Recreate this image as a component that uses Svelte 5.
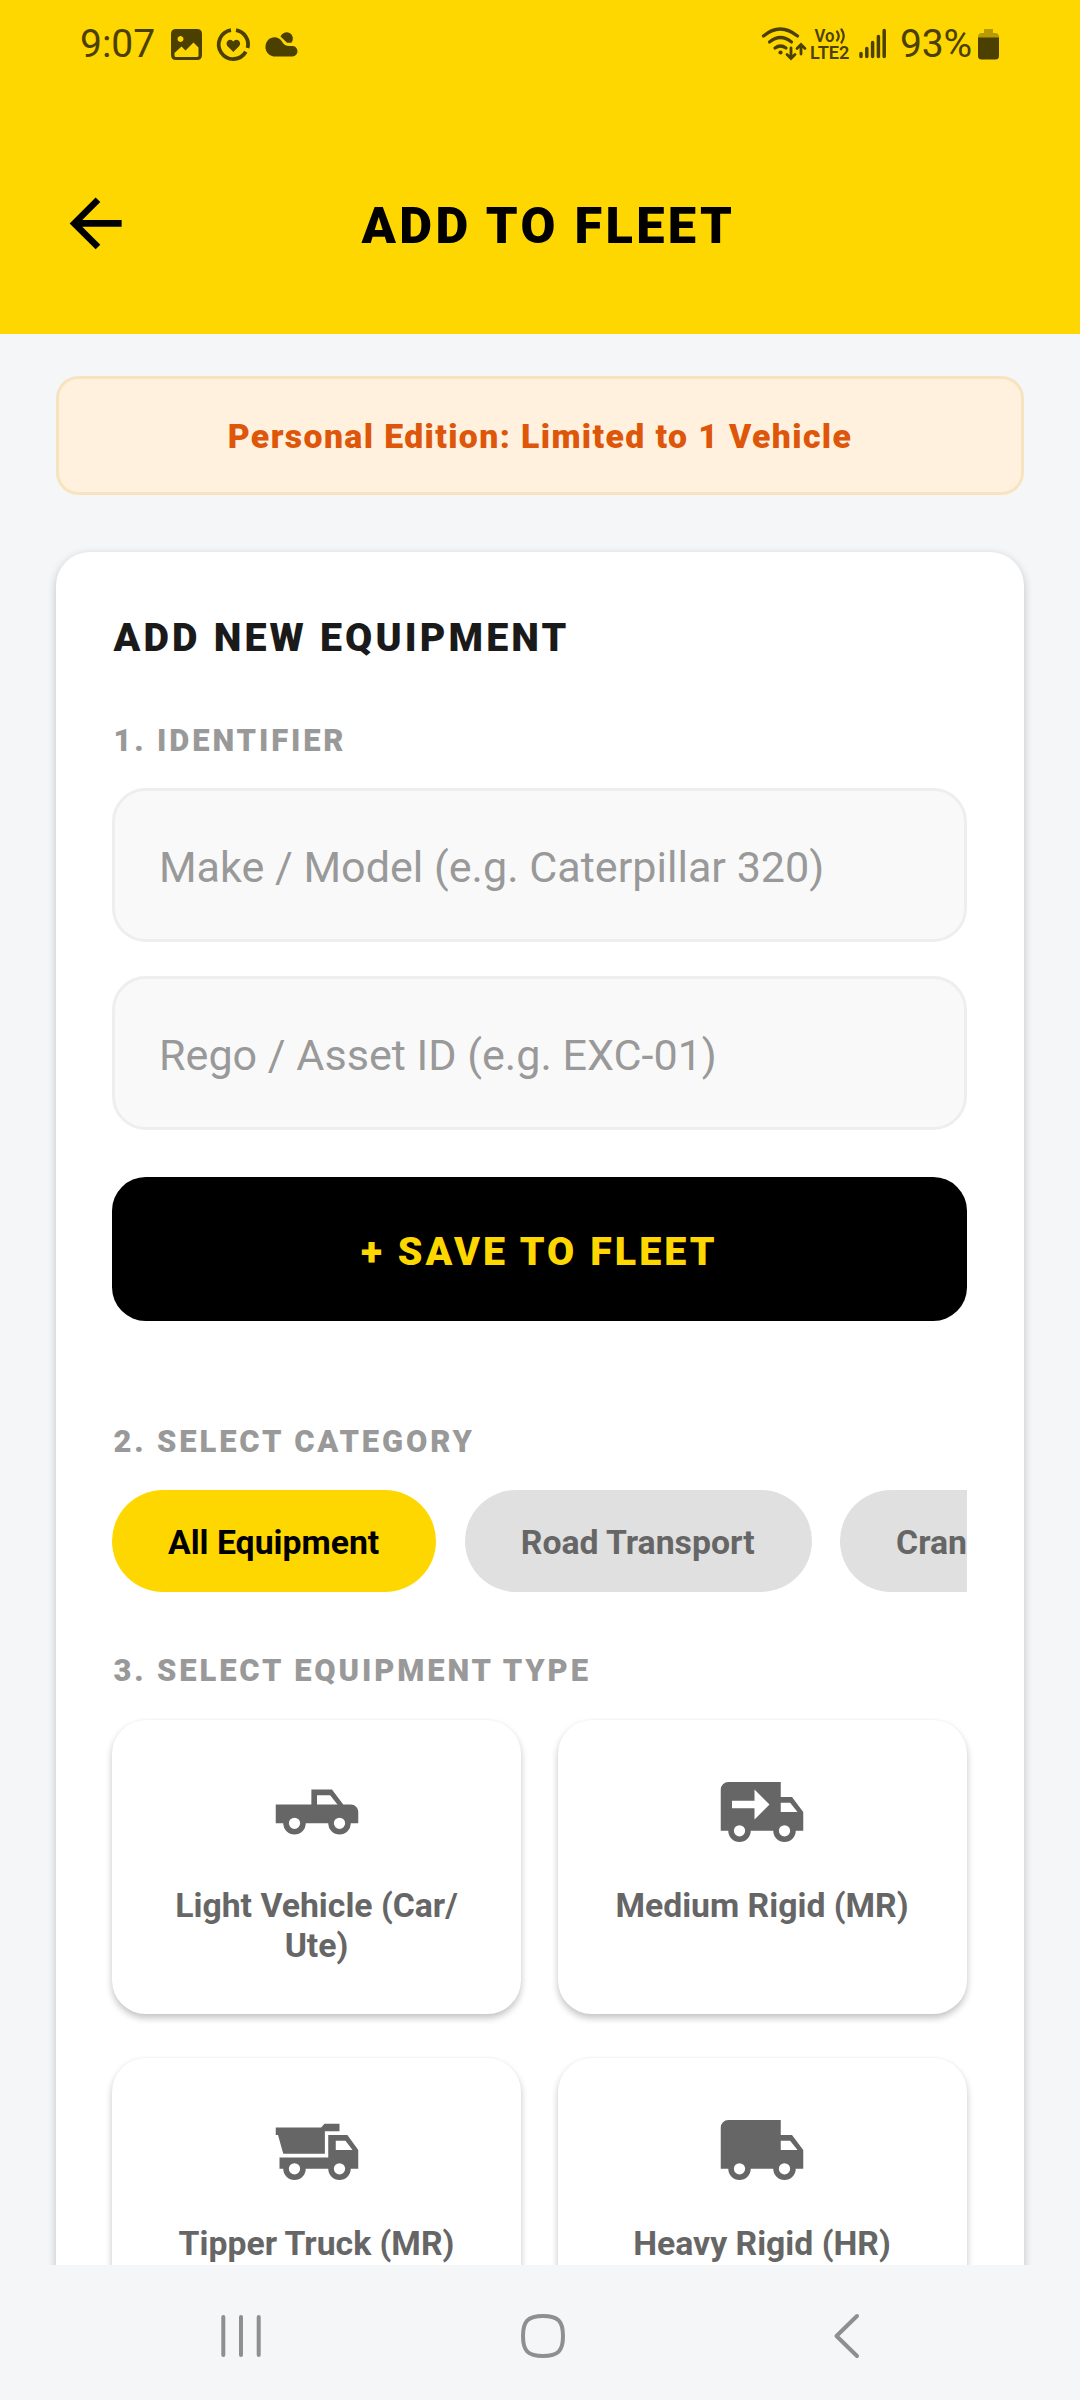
<script>
  const categories = [
    { name: 'All Equipment', active: true },
    { name: 'Road Transport', active: false },
    { name: 'Cranes', active: false }
  ];

  const wheels = (y) =>
    `M6 ${y}a1.5 1.5 0 1 1 0 3a1.5 1.5 0 0 1 0-3zM18 ${y}a1.5 1.5 0 1 1 0 3a1.5 1.5 0 0 1 0-3z`;
  const truckBody =
    'M3 4A2 2 0 0 0 1 6V17H3A3 3 0 0 0 9 17H15A3 3 0 0 0 21 17H23V12L20 8H17V4ZM17 9.5H19.5L21.47 12H17Z';

  const types = [
    {
      name: 'Light Vehicle (Car/\nUte)',
      icon:
        'M16 6H10.5V10H1V15H3A3 3 0 0 0 9 15H15A3 3 0 0 0 21 15H23V12C23 10.89 22.11 10 21 10H19L16 6ZM12 7.5H15.5L17.46 10H12Z' +
        wheels(13.5)
    },
    {
      name: 'Medium Rigid (MR)',
      icon: truckBody + 'M10 6L14 10L10 14V11H4V9H10Z' + wheels(15.5)
    },
    {
      name: 'Tipper Truck (MR)',
      icon:
        'M1 6H13.1L14 5H18V7H14.1V13H3L1.6 8H1ZM15 8H20.1L23 12V17H21A3 3 0 0 1 15 17H9A3 3 0 0 1 3 17H2V14H15ZM17 9.5V12H21.47L19.6 9.5Z' +
        wheels(15.5)
    },
    { name: 'Heavy Rigid (HR)', icon: truckBody + wheels(15.5) }
  ];
</script>

<div class="screen">
  <header>
    <div class="status">
      <span class="clock">9:07</span>
      <svg class="notif" width="128" height="34" viewBox="0 0 128 34">
        <path fill-rule="evenodd" d="M5 1H27Q32 1 32 6V27Q32 32 27 32H6Q1 32 1 27V6Q1 1 6 1ZM10.500 8a3 3 0 1 0 .01 0ZM4.500 25V27.500Q4.500 29 6 29H27Q28.500 29 28.500 27.500V19.500L23.500 14.500L15.500 22.500L11.500 18.500Z" />
        <g fill="none" stroke="currentColor" stroke-width="3.800">
          <path d="M66 2.200A14.500 14.500 0 0 1 77.600 20" />
          <path d="M75.800 23.800A14.500 14.500 0 1 1 61 2.200" />
        </g>
        <path d="M63.300 24L57.300 18Q55.500 15 58 12.600Q61 10.600 63.300 13.600Q65.600 10.600 68.600 12.600Q71.200 15 69.300 18Z" />
        <path d="M110.500 8.500A6.400 6.400 0 1 1 121.500 14.700H117Z" />
        <path class="cloud" d="M103.500 28.500a9 9.700 0 1 1 8.300-15.200q2 4.700 7.700 4.700h2.500a5.250 5.250 0 0 1 .5 10.500Z" />
      </svg>
      <svg class="signals" width="130" height="36" viewBox="0 0 130 36">
        <g fill="none" stroke="currentColor" stroke-width="3.200" stroke-linecap="round">
          <path d="M3.500 10Q20 -4 37.500 10" />
          <path d="M9.500 16Q20.500 7 31.500 16" />
          <path d="M15 22Q20.500 18 26 22" />
          <path d="M31 22V32M27 28.500L31 32.500L35 28.500M41 28V19M37 22.500L41 18.500L45 22.500" stroke-width="2.800" />
        </g>
        <circle cx="20.500" cy="26.500" r="2.100" />
        <text x="54.500" y="16" font-size="17.500" font-weight="600" textLength="20" lengthAdjust="spacingAndGlyphs">Vo</text>
        <g fill="none" stroke="currentColor" stroke-width="2.200" stroke-linecap="round">
          <path d="M77 5.500Q80.500 10 77 14.500M81.500 3.500Q86 10 81.500 16.500" />
        </g>
        <text x="50" y="33.300" font-size="17.500" font-weight="600" textLength="39.500" lengthAdjust="spacingAndGlyphs">LTE2</text>
        <g stroke="currentColor" stroke-width="3.500" stroke-linecap="round">
          <path d="M101 27.500V30.500M106.800 22.500V30.500M112.600 16.500V30.500M118.400 10.500V30.500M124.200 4.500V30.500" />
        </g>
      </svg>
      <span class="percent">93%</span>
      <svg class="battery" width="22" height="32" viewBox="0 0 22 32">
        <path opacity=".4" d="M6 1H15V5H17Q21 5 21 9V10H0V9Q0 5 4 5H6Z" />
        <path d="M0 9.500H21V28Q21 31.500 17.500 31.500H3.500Q0 31.500 0 28Z" />
      </svg>
    </div>
    <div class="bar">
      <svg class="back" viewBox="0 0 24 24">
        <path d="M20 11V13H8L13.500 18.500L12.080 19.920L4.160 12L12.080 4.080L13.500 5.500L8 11H20Z" />
      </svg>
      <h1>ADD TO FLEET</h1>
      <span class="spacer"></span>
    </div>
  </header>

  <main>
    <div class="notice">Personal Edition: Limited to 1 Vehicle</div>

    <section class="card">
      <h2>ADD NEW EQUIPMENT</h2>

      <h3>1. IDENTIFIER</h3>
      <div class="fields">
        <input type="text" placeholder="Make / Model (e.g. Caterpillar 320)" />
        <input type="text" placeholder="Rego / Asset ID (e.g. EXC-01)" />
      </div>
      <button class="save">+ SAVE TO FLEET</button>

      <h3 class="category-title">2. SELECT CATEGORY</h3>
      <div class="pills">
        {#each categories as c}
          <button class="pill" class:active={c.active}>{c.name}</button>
        {/each}
      </div>

      <h3 class="type-title">3. SELECT EQUIPMENT TYPE</h3>
      <div class="grid">
        {#each types as t}
          <div class="type">
            <svg viewBox="0 0 24 24"><path fill-rule="evenodd" d={t.icon} /></svg>
            <span>{t.name}</span>
          </div>
        {/each}
      </div>
    </section>
  </main>

  <nav>
    <svg width="44" height="48" viewBox="0 0 44 48">
      <path d="M4.300 5V43M22 5V43M39.700 5V43" />
    </svg>
    <svg class="home" width="48" height="48" viewBox="0 0 48 48">
      <path d="M24 4C39 4 44 9 44 24S39 44 24 44S4 39 4 24S9 4 24 4Z" />
    </svg>
    <svg width="30" height="48" viewBox="0 0 30 48">
      <path d="M25 4L4.500 24L25 44" stroke-linejoin="round" />
    </svg>
  </nav>
</div>

<style>
  :global(body) {
    background: #f4f6f8;
  }
  .screen {
    width: 1080px;
    height: 2400px;
    display: flex;
    flex-direction: column;
    overflow: hidden;
    background: #f4f6f8;
    font-family: Roboto, 'Liberation Sans', sans-serif;
  }
  h1, h2, h3 {
    margin: 0;
  }
  button, input {
    font-family: inherit;
    box-sizing: border-box;
  }
  header {
    flex: none;
    height: 334px;
    background: #ffd700;
  }
  .status {
    height: 88px;
    box-sizing: border-box;
    padding: 0 80px;
    display: flex;
    align-items: center;
    color: #4b4000;
    fill: #4b4000;
  }
  .clock, .percent {
    font-size: 39px;
    line-height: 46px;
    font-weight: 400;
  }
  .clock {
    width: 90px;
  }
  .notif {
    margin-top: 1px;
  }
  .cloud {
    stroke: #ffd700;
    stroke-width: 2;
    paint-order: stroke;
  }
  .signals {
    margin-left: auto;
  }
  .percent {
    width: 78px;
    margin-left: 10px;
    letter-spacing: -0.2px;
  }
  .bar {
    margin-top: 96px;
    padding: 0 56.25px;
    display: flex;
    align-items: center;
    height: 78.75px;
  }
  .back {
    width: 78.75px;
    height: 78.75px;
  }
  .spacer {
    width: 62px;
  }
  h1 {
    flex: 1;
    padding-top: 6px;
    text-align: center;
    font-size: 50.6px;
    line-height: 60px;
    font-weight: 900;
    letter-spacing: 3.3px;
    color: #000;
  }
  main {
    flex: 1;
    min-height: 0;
    overflow: hidden;
    padding: 42.2px 56.25px 0;
  }
  .notice {
    height: 119.3px;
    box-sizing: border-box;
    padding-top: 1px;
    border: 3px solid #f7e3c0;
    border-radius: 22.5px;
    background: #fff1de;
    color: #de560a;
    font-size: 33.75px;
    line-height: 113px;
    font-weight: 900;
    letter-spacing: 1.4px;
    text-align: center;
  }
  .card {
    margin-top: 56.25px;
    padding: 56.25px 57.25px 56.25px 55.75px;
    height: 2000px;
    border-radius: 33.75px;
    background: #fff;
    box-shadow: 0 3px 10px rgba(0, 0, 0, 0.22);
  }
  h2 {
    padding: 1px 0 0 1.5px;
    margin-bottom: -1px;
    font-size: 39.375px;
    line-height: 58px;
    font-weight: 900;
    letter-spacing: 3.15px;
    color: #1a1a1a;
  }
  h3 {
    padding: 1px 0 0 1.5px;
    margin: 56.5px 0 28.5px;
    font-size: 30.94px;
    line-height: 36px;
    font-weight: 900;
    letter-spacing: 2.87px;
    color: #999;
  }
  .fields {
    display: flex;
    flex-direction: column;
    gap: 34px;
  }
  input {
    width: 100%;
    height: 154px;
    padding: 5px 42.2px 0 44px;
    border: 3px solid #eee;
    border-radius: 33.75px;
    background: #f9f9f9;
    font-size: 43.1px;
    outline: none;
  }
  input::placeholder {
    color: #999;
    opacity: 1;
  }
  .save {
    display: block;
    width: 100%;
    height: 143.7px;
    margin-top: 47px;
    padding: 5px 0 0;
    border: 0;
    border-radius: 33.75px;
    background: #000;
    color: #ffd700;
    font-size: 39.375px;
    font-weight: 900;
    letter-spacing: 3.05px;
  }
  .category-title {
    margin: 102.5px 0 29.7px;
  }
  .pills {
    display: flex;
    gap: 28.5px;
    overflow: hidden;
  }
  .pill {
    flex: none;
    height: 101.7px;
    padding: 3px 57px 0 56px;
    border: 0;
    border-radius: 51px;
    background: #e0e0e0;
    color: #666;
    font-size: 33.75px;
    font-weight: 700;
  }
  .pill.active {
    background: #ffd700;
    color: #000;
  }
  .type-title {
    margin: 60.7px 0 30.6px;
  }
  .grid {
    display: grid;
    grid-template-columns: 1fr 1fr;
    grid-auto-rows: 294px;
    column-gap: 36.5px;
    row-gap: 44.3px;
  }
  .type {
    display: flex;
    flex-direction: column;
    align-items: center;
    gap: 29px;
    padding-top: 47px;
    box-sizing: border-box;
    border-radius: 33.75px;
    background: #fff;
    box-shadow: 0 4px 7px rgba(0, 0, 0, 0.24), 0 -1px 1px rgba(0, 0, 0, 0.02);
    fill: #666;
    color: #666;
    font-size: 33.75px;
    line-height: 40.3px;
    font-weight: 700;
    text-align: center;
    white-space: pre-line;
  }
  .type svg {
    width: 90px;
    height: 90px;
    flex: none;
  }
  nav {
    flex: none;
    height: 135px;
    box-sizing: border-box;
    padding: 47px 218px 0 219px;
    display: flex;
    justify-content: space-between;
  }
  nav svg {
    fill: none;
    stroke: #8d8f90;
    stroke-width: 4;
    stroke-linecap: round;
  }
  .home {
    margin-right: 10px;
  }
</style>
